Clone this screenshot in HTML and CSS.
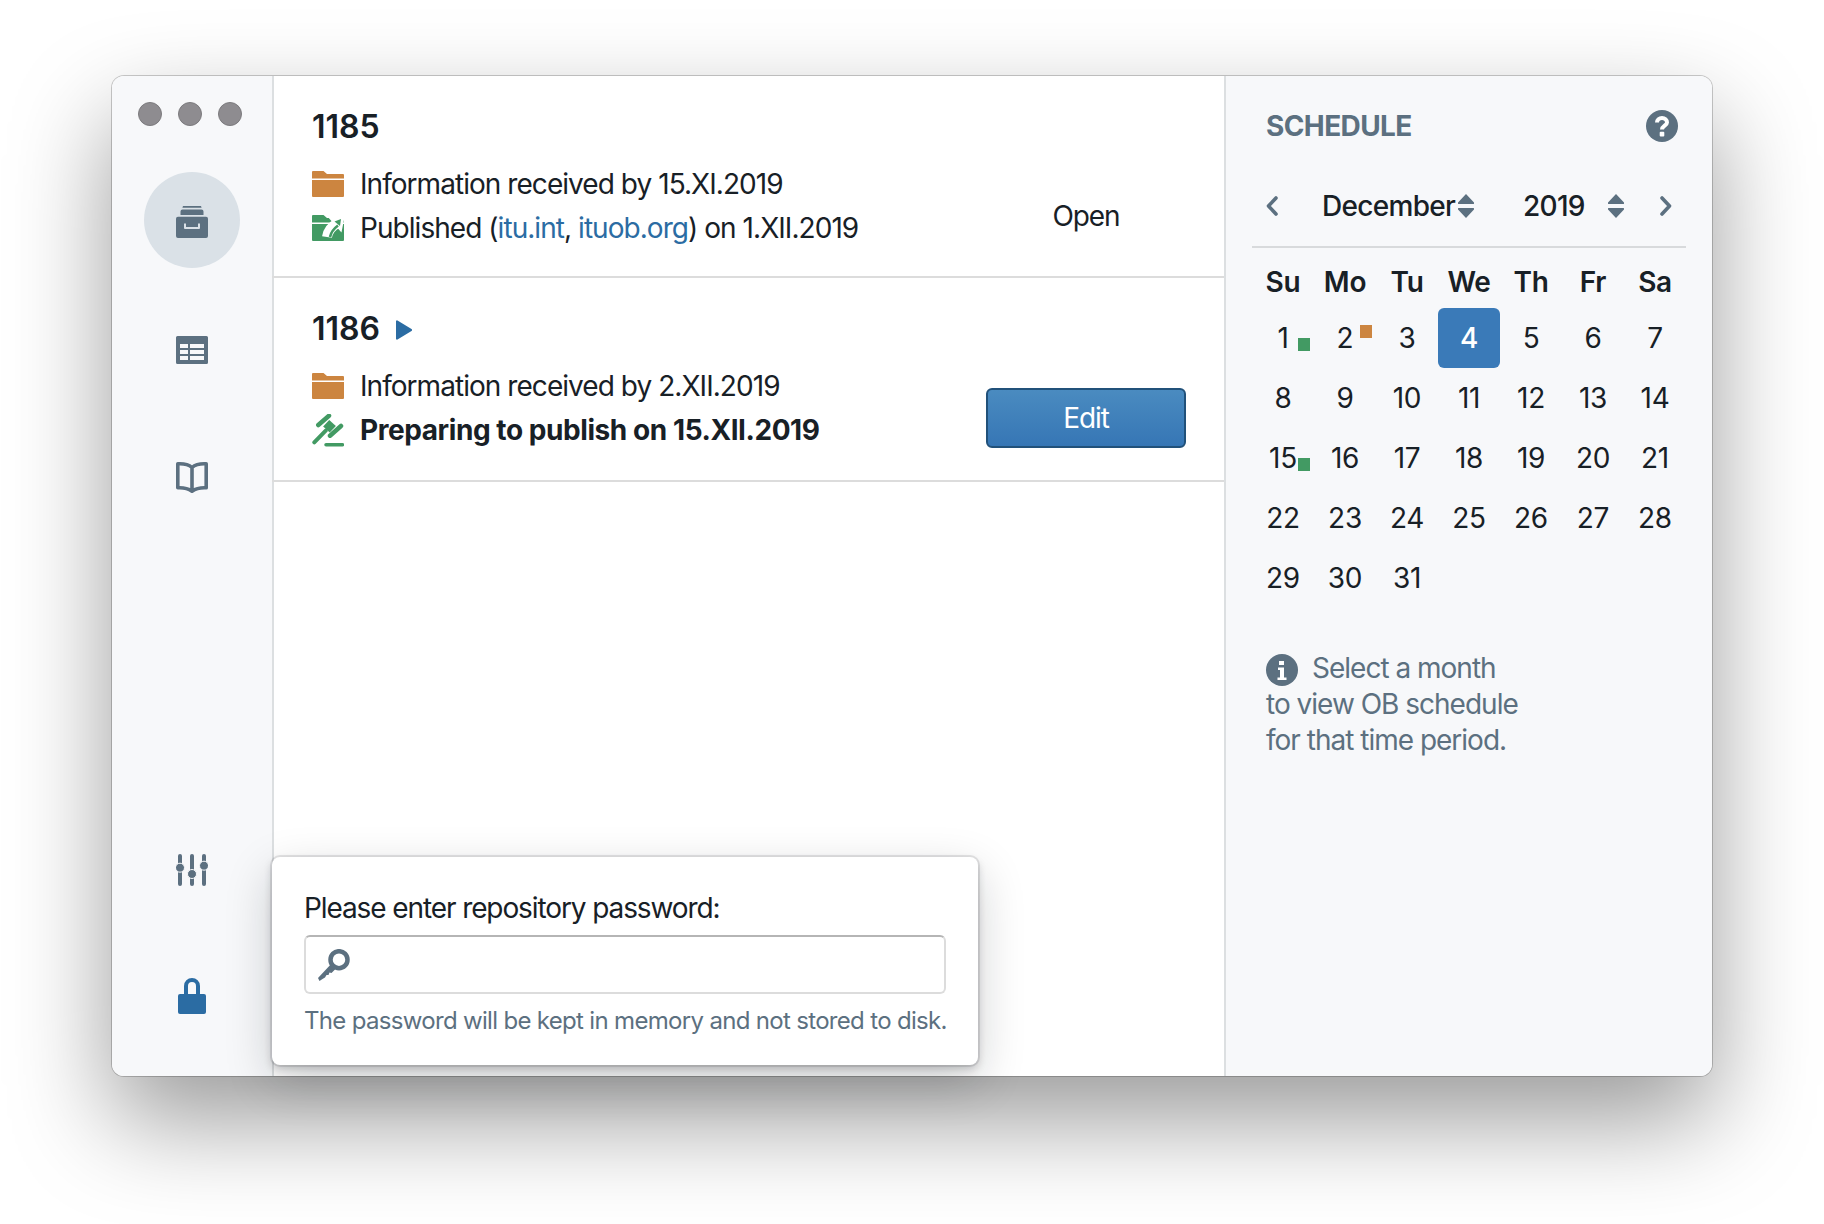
FILE: index.html
```html
<!DOCTYPE html>
<html lang="en">
<head>
<meta charset="utf-8">
<title>Schedule</title>
<link rel="stylesheet" href="styles.css">
</head>
<body>
<div class="window">
  <nav class="sidebar">
    <div class="lights"><span class="light"></span><span class="light"></span><span class="light"></span></div>
    <div class="nav-group">
      <div class="nav-item nav-item--active">
        <svg class="icon" width="32" height="36" viewBox="0 0 32 36"><path d="M7 4h18l.6 1.700H6.400zM6.500 7.600h19a2 2 0 0 1 2 2v3.400H4.500V9.600a2 2 0 0 1 2-2z" fill="#5c7080"/><path fill-rule="evenodd" d="M2 14.700h28a2 2 0 0 1 2 2v17.300a2 2 0 0 1-2 2H2a2 2 0 0 1-2-2V16.700a2 2 0 0 1 2-2zM8 21.500v4.500a1 1 0 0 0 1 1h14a1 1 0 0 0 1-1v-4.500h-2v3.500H10v-3.500z" fill="#5c7080"/></svg>
      </div>
      <div class="nav-item">
        <svg class="icon" width="32" height="36" viewBox="0 0 32 36"><path fill-rule="evenodd" d="M1.500 6h29A1.500 1.500 0 0 1 32 7.500v25a1.500 1.500 0 0 1-1.500 1.500h-29A1.500 1.500 0 0 1 0 32.500v-25A1.500 1.500 0 0 1 1.500 6zM4 14v4h8v-4zM14 14v4h14v-4zM4 20v4h8v-4zM14 20v4h14v-4zM4 26v4h8v-4zM14 26v4h14v-4z" fill="#5c7080"/></svg>
      </div>
      <div class="nav-item">
        <svg class="icon" width="32" height="36" viewBox="0 0 32 36"><path d="M16 9.500C12.500 6.500 7 5.500 1.800 5.800v24c5.500-.3 10.200.6 14.200 3.400 4-2.800 8.700-3.700 14.200-3.400v-24C25 5.500 19.500 6.500 16 9.500zM16 9.500v23.500" fill="none" stroke="#5c7080" stroke-width="3.600" stroke-linejoin="round"/></svg>
      </div>
    </div>
    <div class="nav-group nav-group--bottom">
      <div class="nav-item">
        <svg class="icon" width="32" height="32" viewBox="0 0 32 32"><g fill="#5c7080"><rect x="2" y="0" width="4" height="32" rx="2"/><rect x="14" y="0" width="4" height="32" rx="2"/><rect x="26" y="0" width="4" height="32" rx="2"/></g><g fill="#5c7080" stroke="#f7f8fa" stroke-width="1"><circle cx="4" cy="13.700" r="4.500"/><circle cx="16" cy="20" r="4.500"/><circle cx="28" cy="11.700" r="4.500"/></g></svg>
      </div>
      <div class="nav-item">
        <svg class="icon" width="28" height="36" viewBox="0 0 28 36"><path d="M8 17V8a6 6 0 0 1 12 0v9" fill="none" stroke="#2b6ca3" stroke-width="4"/><rect x="0" y="16" width="28" height="20" rx="2" fill="#2b6ca3"/></svg>
      </div>
    </div>
  </nav>

  <main class="list">
    <section class="row">
      <div class="row-body">
        <h2 class="row-title">1185</h2>
        <div class="meta">
          <svg class="icon" width="32" height="26" viewBox="0 0 32 26"><path d="M1 0h10.500l3.500 3h16a1 1 0 0 1 1 1v3.600H0V1a1 1 0 0 1 1-1zM0 9h32v16a1 1 0 0 1-1 1H1a1 1 0 0 1-1-1z" fill="#cc8540"/></svg>
          <span>Information received by 15.XI.2019</span>
        </div>
        <div class="meta">
          <svg class="icon" width="32" height="26" viewBox="0 0 32 26"><path d="M1 0h10.500l3.500 3h16a1 1 0 0 1 1 1v3.600H0V1a1 1 0 0 1 1-1zM0 9h32v16a1 1 0 0 1-1 1H1a1 1 0 0 1-1-1z" fill="#429a63"/><path d="M15 22C16 16 20 11 26 8" fill="none" stroke="#fff" stroke-width="10"/><path d="M21 4 30 2 28 12z" fill="#fff" stroke="#fff" stroke-width="5"/><path d="M18 22C19 17 22 13.500 26 10.500" fill="none" stroke="#429a63" stroke-width="2.600"/><path d="M22.500 6.500 29 4 28 11z" fill="#429a63"/></svg>
          <span>Published (<a class="link" href="#">itu.int</a>, <a class="link" href="#">ituob.org</a>) on 1.XII.2019</span>
        </div>
      </div>
      <div class="row-action"><span class="action-text">Open</span></div>
    </section>
    <section class="row row--current">
      <div class="row-body">
        <h2 class="row-title">1186 <svg class="icon title-caret" width="16" height="20" viewBox="0 0 16 20"><path d="M1.500 0.500 15.500 9a1.200 1.200 0 0 1 0 2L1.500 19.500A1 1 0 0 1 0 18.600V1.400A1 1 0 0 1 1.500 0.500z" fill="#2b6ca3"/></svg></h2>
        <div class="meta">
          <svg class="icon" width="32" height="26" viewBox="0 0 32 26"><path d="M1 0h10.500l3.500 3h16a1 1 0 0 1 1 1v3.600H0V1a1 1 0 0 1 1-1zM0 9h32v16a1 1 0 0 1-1 1H1a1 1 0 0 1-1-1z" fill="#cc8540"/></svg>
          <span>Information received by 2.XII.2019</span>
        </div>
        <div class="meta meta--strong">
          <svg class="icon" width="32" height="33" viewBox="0 0 32 33"><g fill="none" stroke="#429a63"><path d="M6.300 11 17 1.700M18 21.700 29 12" stroke-width="4.500" stroke-linecap="round"/><path d="M14.200 9.200 20.800 15.300" stroke-width="9"/><path d="M2.300 28.300 13.700 16.700" stroke-width="4" stroke-linecap="round"/><path d="M14 30.800H30.500" stroke-width="3.500" stroke-linecap="round"/></g></svg>
          <span>Preparing to publish on 15.XII.2019</span>
        </div>
      </div>
      <div class="row-action"><button class="btn" type="button">Edit</button></div>
    </section>
  </main>

  <aside class="schedule">
    <header class="schedule-head">
      <h3 class="schedule-title">SCHEDULE</h3>
      <svg class="icon" width="32" height="32" viewBox="0 0 32 32"><circle cx="16" cy="16" r="16" fill="#5c7080"/><path d="M11 12.500a5 4.500 0 0 1 10 0c0 3-5 3.500-5 7" fill="none" stroke="#fff" stroke-width="4"/><rect x="13.700" y="21.700" width="4.600" height="4.800" rx="1" fill="#fff"/></svg>
    </header>
    <div class="month-nav">
      <svg class="icon chev" width="12" height="20" viewBox="0 0 12 20"><path d="M10 2 2.500 10l7.500 8" fill="none" stroke="#5c7080" stroke-width="3.600" stroke-linecap="round" stroke-linejoin="round"/></svg>
      <div class="picker picker--month"><span>December</span><svg class="icon" width="16" height="24" viewBox="0 0 16 24"><path d="M8 0 16 8.500a1 1 0 0 1-.7 1.500H.7A1 1 0 0 1 0 8.500zM8 24 16 15.500a1 1 0 0 0-.7-1.500H.7a1 1 0 0 0-.7 1.500z" fill="#5c7080"/></svg></div>
      <div class="picker picker--year"><span>2019</span><svg class="icon" width="16" height="24" viewBox="0 0 16 24"><path d="M8 0 16 8.500a1 1 0 0 1-.7 1.500H.7A1 1 0 0 1 0 8.500zM8 24 16 15.500a1 1 0 0 0-.7-1.500H.7a1 1 0 0 0-.7 1.500z" fill="#5c7080"/></svg></div>
      <svg class="icon chev chev--next" width="12" height="20" viewBox="0 0 12 20"><path d="M2 2l7.500 8L2 18" fill="none" stroke="#5c7080" stroke-width="3.600" stroke-linecap="round" stroke-linejoin="round"/></svg>
    </div>
    <div class="calendar">
      <div class="dow">Su</div><div class="dow">Mo</div><div class="dow">Tu</div><div class="dow">We</div><div class="dow">Th</div><div class="dow">Fr</div><div class="dow">Sa</div>
      <div class="day">1<i class="mark mark--green"></i></div><div class="day">2<i class="mark mark--orange"></i></div><div class="day">3</div><div class="day day--today">4</div><div class="day">5</div><div class="day">6</div><div class="day">7</div>
      <div class="day">8</div><div class="day">9</div><div class="day">10</div><div class="day">11</div><div class="day">12</div><div class="day">13</div><div class="day">14</div>
      <div class="day">15<i class="mark mark--green"></i></div><div class="day">16</div><div class="day">17</div><div class="day">18</div><div class="day">19</div><div class="day">20</div><div class="day">21</div>
      <div class="day">22</div><div class="day">23</div><div class="day">24</div><div class="day">25</div><div class="day">26</div><div class="day">27</div><div class="day">28</div>
      <div class="day">29</div><div class="day">30</div><div class="day">31</div>
    </div>
    <p class="note"><svg class="icon note-icon" width="32" height="32" viewBox="0 0 32 32"><circle cx="16" cy="16" r="16" fill="#5c7080"/><path d="M13 7h5v4h-5zM12 13.500h6v10h2.500V26h-9v-2.500H14v-7.500h-2z" fill="#fff"/></svg>Select a month<br>to view OB schedule<br>for that time period.</p>
  </aside>

  <div class="popover">
    <label class="pop-label">Please enter repository password:</label>
    <div class="pop-input">
      <svg class="icon" width="32" height="32" viewBox="0 0 32 32"><circle cx="21" cy="10.700" r="8.500" fill="none" stroke="#5c7080" stroke-width="4.500"/><path d="M14.500 13.500 19 18.500 13.500 24 11.500 23.500 10.500 26 8.500 26 7 28.500 4.500 30 1.500 32 0 29z" fill="#5c7080"/></svg>
    </div>
    <p class="pop-help">The password will be kept in memory and not stored to disk.</p>
  </div>
</div>
</body>
</html>
```
FILE: styles.css
```css
* { box-sizing: border-box; }
html, body { margin: 0; padding: 0; background: #fff; }
body {
  width: 1824px;
  height: 1224px;
  padding: 76px 112px;
  overflow: hidden;
  font-family: Inter, "Liberation Sans", sans-serif;
  font-size: 28px;
  color: #182026;
}
.icon { display: block; flex: none; }

.window {
  position: relative;
  display: flex;
  width: 1600px;
  height: 1000px;
  background: #fff;
  border-radius: 12px;
  box-shadow: 0 0 0 1px rgba(0,0,0,.2), 0 44px 100px rgba(0,0,0,.4);
}

.sidebar {
  display: flex;
  flex-direction: column;
  flex: none;
  width: 162px;
  background: #f7f8fa;
  border-right: 2px solid #dcdfe1;
  border-radius: 12px 0 0 12px;
}
.lights { display: flex; gap: 16px; padding: 26px 0 0 26px; }
.light {
  width: 24px; height: 24px; border-radius: 50%;
  background: #8e8c90; border: 1px solid #7c7b7e;
}
.nav-group { display: flex; flex-direction: column; align-items: center; gap: 32px; margin-top: 46px; }
.nav-group--bottom { margin-top: auto; gap: 30px; padding-bottom: 32px; }
.nav-item {
  display: flex; align-items: center; justify-content: center;
  width: 96px; height: 96px; border-radius: 50%;
}
.nav-item--active { background: #dae1e7; }

.list { flex: 1; min-width: 0; }
.row {
  display: flex;
  justify-content: space-between;
  margin-left: -2px;
  padding: 30px 38px 26px 40px;
  border-bottom: 2px solid #dcdcdc;
}
.row--current { padding-bottom: 28px; }
.row-title {
  display: flex; align-items: center; gap: 16px;
  height: 42px; margin: 0 0 14px;
  font-size: 32px; font-weight: 600; line-height: 42px;
}
.title-caret { margin-top: 2px; }
.meta { display: flex; align-items: center; gap: 16px; height: 44px; line-height: 44px; white-space: nowrap; letter-spacing: -.95px; }
.meta--strong { font-weight: 700; letter-spacing: -.43px; }
.link { color: #2b6ca3; text-decoration: none; }
.row-action {
  display: flex; align-items: center; justify-content: center;
  align-self: flex-end;
  width: 200px; height: 60px; margin-bottom: 4px;
  letter-spacing: -1.1px;
}
.btn {
  width: 200px; height: 60px; padding: 0;
  font: inherit; letter-spacing: inherit; color: #fff;
  background: linear-gradient(#4a8bc0, #3676b5);
  border: 2px solid #21517a;
  border-radius: 6px;
}

.schedule {
  flex: none;
  width: 488px;
  padding: 34px 26px 0;
  background: #f7f8fa;
  border-left: 2px solid #dcdfe1;
  border-radius: 0 12px 12px 0;
}
.schedule-head { display: flex; align-items: center; justify-content: space-between; height: 32px; padding: 0 8px 0 14px; }
.schedule-title { margin: 0; font-size: 28px; font-weight: 700; letter-spacing: -.6px; color: #5c7080; }
.month-nav {
  display: flex; align-items: center;
  height: 62px; margin-top: 44px; padding: 0 14px 20px;
  border-bottom: 2px solid #d8dadc;
}
.picker { display: flex; align-items: center; justify-content: space-between; font-weight: 500; letter-spacing: -.7px; }
.picker--month { width: 152px; margin-left: 44px; }
.picker--year { width: 101px; margin-left: 49px; }
.chev--next { margin-left: 36px; }
.calendar {
  display: grid;
  grid-template-columns: repeat(7, 62px);
  grid-template-rows: 52px repeat(5, 60px);
  margin-top: 8px;
  letter-spacing: -.3px;
}
.dow, .day { position: relative; display: flex; align-items: center; justify-content: center; }
.dow { font-weight: 600; }
.day--today { background: #3a7ab8; color: #fff; border-radius: 6px; font-weight: 500; }
.mark { position: absolute; right: 4px; width: 12px; height: 13px; }
.mark--green { top: 30px; background: #429a63; }
.mark--orange { top: 17px; background: #cc8540; }
.note { margin: 42px 0 0; padding-left: 14px; color: #5c7080; line-height: 36px; letter-spacing: -1px; }
.note-icon { display: inline-block; vertical-align: -8px; margin-right: 14px; }

.popover {
  position: absolute;
  left: 160px;
  top: 781px;
  width: 706px;
  height: 208px;
  padding: 31px 32px 0;
  background: #fff;
  border-radius: 8px;
  box-shadow: 0 0 0 2px rgba(16,22,26,.1), 0 4px 8px rgba(16,22,26,.2), 0 16px 48px rgba(16,22,26,.2);
}
.pop-label { display: block; line-height: 40px; white-space: nowrap; letter-spacing: -1.1px; }
.pop-input {
  width: 642px; height: 59px; margin-top: 7px; padding: 12px 12px;
  background: #fff;
  border: 2px solid #dcdcdc;
  border-top-color: #b5b5b5;
  border-radius: 6px;
}
.pop-help { margin: 9px 0 0; color: #5c7080; line-height: 36px; font-size: 24px; letter-spacing: -.68px; white-space: nowrap; }
```
